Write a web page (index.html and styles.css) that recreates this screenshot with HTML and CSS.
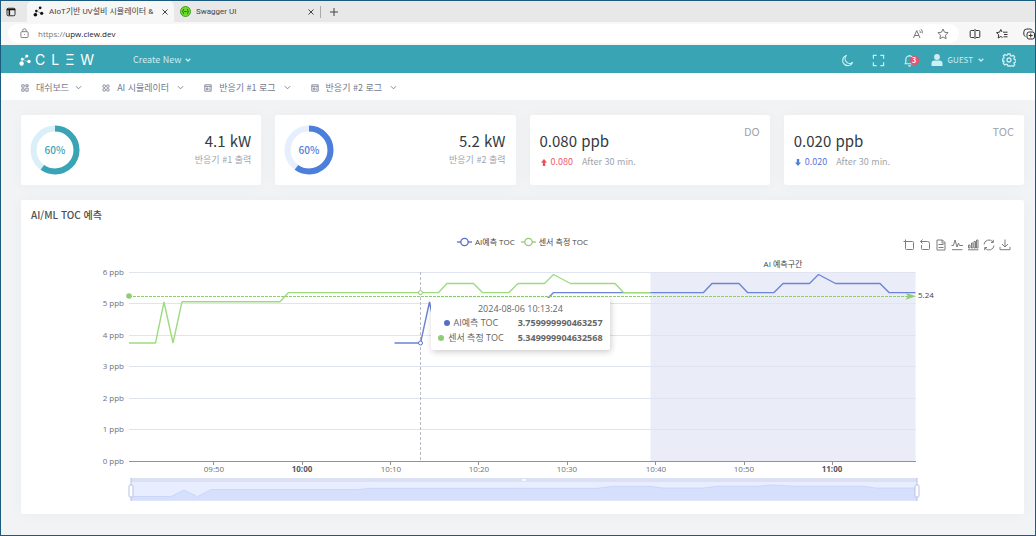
FILE: index.html
```html
<!DOCTYPE html>
<html lang="ko">
<head>
<meta charset="utf-8">
<meta name="viewport" content="width=device-width, initial-scale=1">
<title>AIoT기반 UV설비 시뮬레이터</title>
<link rel="stylesheet" href="styles.css">
</head>
<body>
<div class="window">
  <div class="tabs">
    <button class="tab-menu" aria-label="Tab actions"><svg class="icon" viewBox="0 0 12 12" width="10" height="10"><rect x="1.200" y="1.500" width="9.600" height="9" rx="1.500"/><path d="M1 3h10M4 3v7" stroke-width="1.800"/></svg></button>
    <div class="tab tab-active">
      <svg class="dots" viewBox="0 0 12 12" width="11" height="11"><path d="M2.500 9.500L4 5.500M5 5L7.500 2.500M4 5.500L9 8" /><circle cx="2.600" cy="9.500" r="2"/><circle cx="3.600" cy="5.400" r="1.300"/><circle cx="7.800" cy="2" r="1.500"/><circle cx="9.500" cy="8" r="1.700"/></svg>
      <span class="tab-title">AIoT기반 UV설비 시뮬레이터 &amp;</span>
      <button aria-label="Close tab"><svg class="icon" viewBox="0 0 8 8" width="8" height="8"><path d="M1.500 1.500l5 5M6.500 1.500l-5 5"/></svg></button>
    </div>
    <div class="tab">
      <svg viewBox="0 0 12 12" width="11" height="11"><circle cx="6" cy="6" r="5.500" fill="#6fdc2c" stroke="#3c9a24"/><path d="M4.500 3.500q-1 0-1 1.200T2.800 6q.7.100.7 1.300t1 1.200M7.500 3.500q1 0 1 1.200T9.200 6q-.7.100-.7 1.300t-1 1.200M4.700 6h2.600" fill="none" stroke="#225c18"/></svg>
      <span class="tab-title">Swagger UI</span>
      <button aria-label="Close tab"><svg class="icon" viewBox="0 0 8 8" width="8" height="8"><path d="M1.500 1.500l5 5M6.500 1.500l-5 5"/></svg></button>
    </div>
    <button class="new-tab" aria-label="New tab"><svg class="icon" viewBox="0 0 10 10" width="10" height="10"><path d="M5 1v8M1 5h8"/></svg></button>
  </div>

  <div class="address-row">
    <div class="address">
      <svg class="icon lock" viewBox="0 0 10 12" width="9" height="11"><rect x="1" y="4" width="8" height="6.500" rx="1"/><path d="M3 4V2.800a2 2 0 0 1 4 0V4M5 6.800v.900"/></svg>
      <label for="url">https://</label>
      <input id="url" type="text" value="upw.clew.dev">
      <button aria-label="Read aloud"><svg class="icon" viewBox="0 0 12 12" width="12" height="12"><path d="M1.500 10L4.700 2.500 8 10M2.700 7.500h4M7.500 2.500q1.200 1 .8 2.500M9 1.200q2 1.700 1.200 4.200"/></svg></button>
      <button aria-label="Add favourite"><svg class="icon" viewBox="0 0 12 12" width="12" height="12"><path d="M6 1l1.500 3.200 3.500.5-2.500 2.500.6 3.500L6 9 2.900 10.700l.6-3.500L1 4.700l3.500-.5z"/></svg></button>
    </div>
    <div class="browser-tools">
      <button aria-label="Split screen"><svg class="icon" viewBox="0 0 12 12" width="12" height="12"><path d="M5 2.500H2.200q-1 0-1 1v5q0 1 1 1H5M7 2.500h2.800q1 0 1 1v5q0 1-1 1H7M6 1v10"/></svg></button>
      <button aria-label="Favourites"><svg class="icon" viewBox="0 0 12 12" width="12" height="12"><path d="M7 4.200h4.500M8 6.500h3.500M7.500 8.800h4M6 4L4.800 1.500 3.500 4.200l-3 .4 2.200 2.200-.5 3.200 2.600-1.500 1.700 1"/></svg></button>
      <button aria-label="Collections"><svg class="icon" viewBox="0 0 12 12" width="12" height="12"><rect x="4" y="4" width="7.500" height="7" rx="2"/><path d="M7.700 5.500v4M5.700 7.500h4M2.500 8.500Q.800 8 .800 6V4q0-3 3-3h3q2 0 2.500 1.500"/></svg></button>
    </div>
  </div>

  <header class="topbar">
    <a class="logo" href="#" aria-label="Clew">
      <svg class="dots" viewBox="0 0 12 12" width="12" height="12"><path d="M2.500 9.500L4 5.500M5 5L7.500 2.500M4 5.500L9 8"/><circle cx="2.600" cy="9.500" r="2.200"/><circle cx="3.300" cy="5.200" r="1.400"/><circle cx="7.800" cy="2" r="1.600"/><circle cx="10" cy="7.500" r="1.700"/></svg>
      <span>C</span><span>L</span><span>Ξ</span><span>W</span>
    </a>
    <button class="create">Create New <svg class="icon chev" viewBox="0 0 6 4" width="6" height="4"><path d="M.700.800L3 3 5.300.800"/></svg></button>
    <div class="actions">
      <button aria-label="Dark mode"><svg class="icon" viewBox="0 0 14 14" width="13" height="13"><path d="M6 1.500A5.600 5.600 0 1 0 12.700 8.700 4.800 4.800 0 0 1 6 1.500z"/></svg></button>
      <button aria-label="Full screen"><svg class="icon" viewBox="0 0 14 14" width="13" height="13"><path d="M1.500 5V1.500H5M9 1.500h3.500V5M12.500 9v3.500H9M5 12.500H1.500V9"/></svg></button>
      <button class="bell" aria-label="Notifications"><svg class="icon" viewBox="0 0 14 14" width="13" height="13"><path d="M1.500 10.500h11M3 10.500V6a4 4 0 0 1 8 0v4.500M5.500 12.700h3M7 1v1"/></svg><span class="badge">3</span></button>
      <button class="guest"><svg viewBox="0 0 12 12" width="12" height="12"><circle cx="6" cy="3" r="2.900" fill="currentColor"/><path d="M.500 12V9.500q0-3 3-3h5q3 0 3 3V12z" fill="currentColor"/></svg>GUEST <svg class="icon chev" viewBox="0 0 6 4" width="6" height="4"><path d="M.700.800L3 3 5.300.800"/></svg></button>
      <button aria-label="Settings"><svg class="icon" viewBox="0 0 14 14" width="14" height="14"><circle cx="7" cy="7" r="2"/><path d="M5.900 1h2.200l.5 1.700 1 .4 1.600-.8 1.500 1.500-.8 1.600.4 1 1.700.5v2.200l-1.700.3-.4 1 .8 1.500-1.500 1.500-1.600-.8-1 .4L8.100 13H5.900l-.5-1.500-1-.4-1.600.8-1.500-1.500.8-1.500-.4-1L.500 8V6l1.200-.4.4-1-.8-1.600 1.500-1.500 1.600.8 1-.4z"/></svg></button>
    </div>
  </header>

  <nav class="menu">
    <button><svg class="icon" viewBox="0 0 10 10" width="8" height="8"><path d="M1 1h3v3H1zM6 1h3v2H6zM6 5h3v4H6zM1 6h3v3H1z"/></svg>대쉬보드<svg class="icon chev" viewBox="0 0 8 5" width="7" height="5"><path d="M1 1l3 3 3-3"/></svg></button>
    <button><svg class="icon" viewBox="0 0 10 10" width="8" height="8"><circle cx="2.700" cy="2.700" r="1.700"/><circle cx="7.300" cy="2.700" r="1.700"/><circle cx="2.700" cy="7.300" r="1.700"/><circle cx="7.300" cy="7.300" r="1.700"/></svg>AI 시뮬레이터<svg class="icon chev" viewBox="0 0 8 5" width="7" height="5"><path d="M1 1l3 3 3-3"/></svg></button>
    <button><svg class="icon" viewBox="0 0 10 10" width="8" height="8"><path d="M1 1h8v8H1zM1 3h8M3 5h2v2H3zM6.500 5H8M6.500 7H8"/></svg>반응기 #1 로그<svg class="icon chev" viewBox="0 0 8 5" width="7" height="5"><path d="M1 1l3 3 3-3"/></svg></button>
    <button><svg class="icon" viewBox="0 0 10 10" width="8" height="8"><path d="M1 1h8v8H1zM1 3h8M3 5h2v2H3zM6.500 5H8M6.500 7H8"/></svg>반응기 #2 로그<svg class="icon chev" viewBox="0 0 8 5" width="7" height="5"><path d="M1 1l3 3 3-3"/></svg></button>
  </nav>

  <main class="content">
    <section class="stats">
      <article class="card power teal">
        <svg class="ring" viewBox="0 0 50 50" width="50" height="50"><circle class="ring-track" cx="25" cy="25" r="21.500"/><circle class="ring-value" cx="25" cy="25" r="21.500" pathLength="100" stroke-dasharray="60 40" transform="rotate(-90 25 25)"/><text x="25" y="28.500" text-anchor="middle">60%</text></svg>
        <div class="reading"><strong>4.1 kW</strong><span>반응기 #1 출력</span></div>
      </article>
      <article class="card power blue">
        <svg class="ring" viewBox="0 0 50 50" width="50" height="50"><circle class="ring-track" cx="25" cy="25" r="21.500"/><circle class="ring-value" cx="25" cy="25" r="21.500" pathLength="100" stroke-dasharray="60 40" transform="rotate(-90 25 25)"/><text x="25" y="28.500" text-anchor="middle">60%</text></svg>
        <div class="reading"><strong>5.2 kW</strong><span>반응기 #2 출력</span></div>
      </article>
      <article class="card level">
        <div><strong>0.080 ppb</strong>
        <p><svg viewBox="0 0 6 7" width="6" height="7"><path d="M3 0l3 3.500H4.200V7H1.800V3.500H0z" fill="#e8505b"/></svg><span class="up">0.080</span><span>After 30 min.</span></p></div>
        <h3>DO</h3>
      </article>
      <article class="card level">
        <div><strong>0.020 ppb</strong>
        <p><svg viewBox="0 0 6 7" width="6" height="7"><path d="M3 7l3-3.500H4.200V0H1.800v3.500H0z" fill="#4c7edb"/></svg><span class="down">0.020</span><span>After 30 min.</span></p></div>
        <h3>TOC</h3>
      </article>
    </section>

    <section class="card chart">
      <h2>AI/ML TOC 예측</h2>
      <div class="chart-head">
        <div class="legend">
          <span><svg viewBox="0 0 15 10" width="15" height="10" stroke="#5470c6" fill="#fff" stroke-width="1.300"><path d="M0 5h15"/><circle cx="7.500" cy="5" r="3.700"/></svg>AI예측 TOC</span>
          <span><svg viewBox="0 0 15 10" width="15" height="10" stroke="#91cc75" fill="#fff" stroke-width="1.300"><path d="M0 5h15"/><circle cx="7.500" cy="5" r="3.700"/></svg>센서 측정 TOC</span>
        </div>
        <div class="toolbox">
          <button aria-label="Zoom"><svg class="icon" viewBox="0 0 12 12" width="12" height="12"><path d="M2.500.500v2M.500 2.500h9q1 0 1 1v6q0 1-1 1h-6q-1 0-1-1v-7"/></svg></button>
          <button aria-label="Zoom reset"><svg class="icon" viewBox="0 0 12 12" width="12" height="12"><path d="M3.500.500l-2 2 2 2M1.500 2.500h7q2 0 2 2v5q0 1-1 1h-6q-1 0-1-1V6"/></svg></button>
          <button aria-label="Data view"><svg class="icon" viewBox="0 0 12 12" width="12" height="12"><path d="M2 1h5.500L10 3.500V11H2zM7 1v3h3M3.500 5.500h5M3.500 8.500h5"/></svg></button>
          <button aria-label="Line chart"><svg class="icon" viewBox="0 0 12 12" width="12" height="12"><path d="M.500 6.500h2L4 1l2 7 1.500-4 1 2.500H12M1 10.700h10.500"/></svg></button>
          <button aria-label="Bar chart"><svg class="icon" viewBox="0 0 12 12" width="12" height="12"><path d="M1.500 6h1.500v3H1.500zM4.500 4H6v5H4.500zM7 2.500h1.500V9H7zM9.500 1H11v8H9.500zM1 10.800h10.500"/></svg></button>
          <button aria-label="Restore"><svg class="icon" viewBox="0 0 12 12" width="12" height="12"><path d="M1 5.500A5 5 0 0 1 10 3M10.300.800V3.500H8M11 6.500a5 5 0 0 1-9 2.500M1.700 11.200V8.500H4"/></svg></button>
          <button aria-label="Save as image"><svg class="icon" viewBox="0 0 12 12" width="12" height="12"><path d="M6 .500v7.500M3 5l3 3 3-3M1 8v2.700h10V8"/></svg></button>
        </div>
      </div>
      <div class="plot">
        <svg class="plot-svg" viewBox="21 253 1003 261" role="img" aria-label="TOC 예측 차트">
          <rect class="forecast" x="650.500" y="272" width="265" height="189"/>
          <path class="grid" d="M129 272.500h787M129 303.500h787M129 335.500h787M129 366.500h787M129 398.500h787M129 429.500h787"/>
          <path class="axis" d="M129 461.500h787M213.500 462v3M302.500 462v3M390.500 462v3M478.500 462v3M567.500 462v3M655.500 462v3M744.500 462v3M832.500 462v3"/>
          <g class="label" text-anchor="end">
            <text x="124" y="275">6 ppb</text><text x="124" y="306">5 ppb</text><text x="124" y="338">4 ppb</text><text x="124" y="369">3 ppb</text><text x="124" y="401">2 ppb</text><text x="124" y="432">1 ppb</text><text x="124" y="464">0 ppb</text>
          </g>
          <g class="label" text-anchor="middle">
            <text x="214" y="472">09:50</text><text class="hour" x="302" y="472">10:00</text><text x="391" y="472">10:10</text><text x="479" y="472">10:20</text><text x="567" y="472">10:30</text><text x="656" y="472">10:40</text><text x="744" y="472">10:50</text><text class="hour" x="832" y="472">11:00</text>
          </g>
          <text class="note" x="783" y="267" text-anchor="middle">AI 예측구간</text>
          <path class="pointer" d="M420.500 272v189"/>
          <path class="line line-blue" d="M394.500 343H420.500L429.500 302 438 343 447 301.700H544.500L553.500 292.600H703.500L712 283.500H739L747.500 292.600H774L783 283.500H809.500L818.500 274.500 835.500 283.500H880L889 292.600H915.500"/>
          <path class="line line-green" d="M129 343H155.500L164 302 173 343 182 301.700H280L288.500 292.600H438.500L447 283.500H473.500L482.500 292.600H509L518 283.500H544.500L553.500 274.500 570.500 283.500H615L623.500 292.600H650.500"/>
          <path class="mean" d="M129 296.500h780"/>
          <circle cx="129" cy="296" r="2.800" fill="#91cc75"/>
          <path d="M905.500 292.800l10.500 3.500-10.500 3.500 2.500-3.500z" fill="#91cc75"/>
          <text class="note" x="918" y="298">5.24</text>
          <circle cx="420.500" cy="292.600" r="2" fill="#fff" stroke="#91cc75"/>
          <circle cx="420.500" cy="343" r="2" fill="#fff" stroke="#5470c6"/>
          <rect x="131" y="478" width="786" height="23" fill="#e8eeff"/>
          <path d="M131 496.500H171L184 490 197.500 496.500 211 489.500H357L370 488.300H597L612 486.300H650L663 488H703L717 486.200H757L771 485 797 486.200H863L876 488H917V500.500H131z" fill="#d6e0fc"/>
          <path class="brush-line" d="M131 496.500H171L184 490 197.500 496.500 211 489.500H357L370 488.300H597L612 486.300H650L663 488H703L717 486.200H757L771 485 797 486.200H863L876 488H917"/>
          <rect x="131" y="478" width="786" height="4" fill="#dbe1f2"/>
          <path d="M522 480h4" stroke="#fff" stroke-width="1.500"/>
          <path class="handle" d="M131 478v23M917 478v23"/>
          <rect class="handle" x="129" y="485" width="4" height="12" rx="1"/>
          <rect class="handle" x="915" y="485" width="4" height="12" rx="1"/>
        </svg>
        <div class="tooltip">
          <table>
            <caption>2024-08-06 10:13:24</caption>
            <tr><th scope="row"><i class="dot dot-blue"></i>AI예측 TOC</th><td>3.759999990463257</td></tr>
            <tr><th scope="row"><i class="dot dot-green"></i>센서 측정 TOC</th><td>5.349999904632568</td></tr>
          </table>
        </div>
      </div>
    </section>
  </main>
</div>
</body>
</html>
```
FILE: styles.css
```css
* { box-sizing: border-box; }
body {
  margin: 0;
  font-family: "Noto Sans CJK KR", sans-serif;
  font-size: 9px;
  line-height: 14px;
  color: #495057;
}
button {
  display: flex;
  align-items: center;
  justify-content: center;
  margin: 0;
  padding: 0;
  border: 0;
  background: none;
  color: inherit;
  font: inherit;
  flex: none;
}
svg { display: block; flex: none; }
h2, h3, p { margin: 0; font-weight: 400; }
.icon { fill: none; stroke: currentColor; stroke-width: 1; }
.dots { fill: currentColor; stroke: currentColor; stroke-width: 0.4; }
.dots circle { stroke: none; }

.window {
  display: flex;
  flex-direction: column;
  min-height: 100vh;
  border: 1px solid #1b5b80;
  background: #f1f3f5;
  overflow: hidden;
}

/* browser chrome */
.tabs {
  display: flex;
  align-items: center;
  height: 21px;
  background: #e8e8e8;
  color: #444;
  font-family: Roboto, "Noto Sans CJK KR", sans-serif;
  font-size: 8px;
}
.tab-menu { width: 20px; margin-right: 6px; color: #111; }
.tab {
  display: flex;
  align-items: center;
  gap: 5px;
  width: 146px;
  height: 21px;
  padding: 0 5px 0 6px;
}
.tab-active { width: 147px; background: #f7f7f7; border-radius: 5px 5px 0 0; }
.tab-active .dots { color: #111; }
.tab-title {
  flex: 1;
  overflow: hidden;
  white-space: nowrap;
}
.new-tab { height: 12px; padding-left: 8px; border-left: 1px solid #aaa; }
.address-row {
  display: flex;
  align-items: center;
  gap: 10px;
  height: 23px;
  padding-left: 7px;
  background: #f7f7f7;
  color: #333;
}
.address {
  display: flex;
  flex: 1;
  align-items: center;
  height: 19px;
  padding: 0 10px 0 12px;
  border-radius: 10px;
  background: #fff;
  color: #777;
  font-family: "Open Sans", sans-serif;
  font-size: 8px;
}
.lock { margin-right: 9px; }
.address input {
  flex: 1;
  min-width: 0;
  padding: 0;
  border: 0;
  background: none;
  color: #222;
  font: inherit;
}
.address button + button { margin-left: 13px; }
.browser-tools { display: flex; gap: 15px; }

/* application header */
.topbar {
  display: flex;
  align-items: center;
  height: 28px;
  padding: 2px 19px 0 18px;
  background: #38a4b4;
  color: #cdeef2;
}
.topbar .icon { stroke-width: 1.3; }
.logo {
  display: flex;
  align-items: center;
  gap: 6px;
  width: 114px;
  color: #fff;
  text-decoration: none;
  font: 14px/16px Inter, sans-serif;
}
.logo .dots { margin-right: -2px; }
.create { gap: 4px; }
.actions {
  display: flex;
  align-items: center;
  gap: 18px;
  margin-left: auto;
}
.bell { position: relative; }
.badge {
  position: absolute;
  left: 7px;
  top: 2px;
  width: 9px;
  height: 9px;
  border-radius: 5px;
  background: #ef5166;
  color: #fff;
  font-size: 7px;
  font-weight: 700;
  line-height: 9px;
}
.guest { gap: 5px; margin-left: -3px; font-size: 8px; }
.menu {
  display: flex;
  align-items: center;
  gap: 20px;
  height: 27px;
  padding: 2px 20px 0 20px;
  background: #fff;
  color: #74788d;
  font-size: 9px;
}
.menu button { gap: 7px; }
.menu .chev { margin-left: -1px; }
.menu button + button .chev { margin-left: 1px; }

/* dashboard */
.content {
  display: flex;
  flex-direction: column;
  gap: 15px;
  padding: 15px 11px 21px 20px;
}
.stats { display: grid; grid-template-columns: repeat(4, 1fr); gap: 14px; }
.card {
  border-radius: 2px;
  background: #fff;
  box-shadow: 0 0 16px rgba(18, 38, 63, 0.03);
}
.power, .level {
  display: flex;
  justify-content: space-between;
  min-height: 70px;
  padding: 10px;
}
.power { align-items: center; padding-left: 9px; }
.stats strong {
  display: block;
  color: #343a40;
  font-size: 15px;
  font-weight: 400;
  line-height: 20px;
}
.reading { color: #a0a5ab; text-align: right; }
.reading span { display: block; line-height: 18px; }
.ring-track, .ring-value { fill: none; stroke-width: 6; }
.ring text { font-size: 10px; font-weight: 500; }
.teal .ring-track { stroke: #daeff8; }
.teal .ring-value { stroke: #38a4b4; }
.teal text { fill: #38a4b4; }
.blue .ring-track { stroke: #e6efff; }
.blue .ring-value { stroke: #4c7edb; }
.blue text { fill: #4c7edb; }
.level { color: #a0a5ab; }
.level strong { margin-top: 6px; }
.level p { display: flex; align-items: center; gap: 4px; padding-left: 1px; line-height: 22px; }
.level h3 { font-size: 11px; line-height: 12px; }
.up { margin-right: 5px; color: #e8606b; }
.down { margin-right: 5px; color: #5b78dc; }

.chart { padding-top: 6px; }
.chart h2 {
  padding: 0 10px;
  font-size: 10px;
  font-weight: 500;
  line-height: 18px;
}
.chart-head {
  display: grid;
  grid-template-columns: 1fr auto 1fr;
  align-items: center;
  height: 20px;
  margin-top: 9px;
  padding: 0 13px;
}
.legend {
  display: flex;
  grid-column: 2;
  gap: 6px;
  padding-bottom: 2px;
  color: #444;
  font: 8px/14px "Open Sans", "Noto Sans CJK KR", sans-serif;
}
.legend span { display: flex; align-items: center; gap: 3px; }
.toolbox { display: flex; gap: 4px; justify-content: flex-end; padding-top: 4px; color: #7d7d7d; }
.plot { position: relative; }
.plot-svg { width: 100%; height: auto; }
.grid { stroke: #e0e4f0; }
.axis { fill: none; stroke: #8d929d; }
.forecast { fill: #eaecf8; }
.label, .note { font: 8px "Open Sans", "Noto Sans CJK KR", sans-serif; fill: #6e7079; }
.label .hour { font-weight: 700; fill: #555864; }
.note { fill: #444; }
.pointer { stroke: #b9bcc4; stroke-dasharray: 3 2; }
.line { fill: none; stroke-width: 1.4; stroke-linejoin: bevel; }
.line-blue { stroke: #6c83d8; }
.line-green { stroke: #9edb80; }
.mean { stroke: #91cc75; stroke-dasharray: 3 1; }
.brush-line { fill: none; stroke: #bccdf7; stroke-width: 0.6; }
.handle { fill: #fff; stroke: #b7c3e6; }
.tooltip {
  position: absolute;
  left: 40.9%;
  top: 17.2%;
  padding: 4px 7px;
  border-radius: 2px;
  background: #fff;
  box-shadow: 1px 2px 6px rgba(0, 0, 0, 0.2);
  color: #666;
  font: 9px/14px "Open Sans", "Noto Sans CJK KR", sans-serif;
  white-space: nowrap;
}
.tooltip table { border-collapse: collapse; }
.tooltip caption { line-height: 14px; }
.tooltip th, .tooltip td { height: 15px; padding: 0; line-height: 14px; }
.tooltip th { font-weight: 400; }
.tooltip td { padding-left: 14px; font-weight: 700; text-align: right; }
.dot {
  display: inline-block;
  width: 6px;
  height: 6px;
  margin-right: 4px;
  border-radius: 3px;
}
.dot-blue { background: #5470c6; }
.dot-green { background: #91cc75; }
```
